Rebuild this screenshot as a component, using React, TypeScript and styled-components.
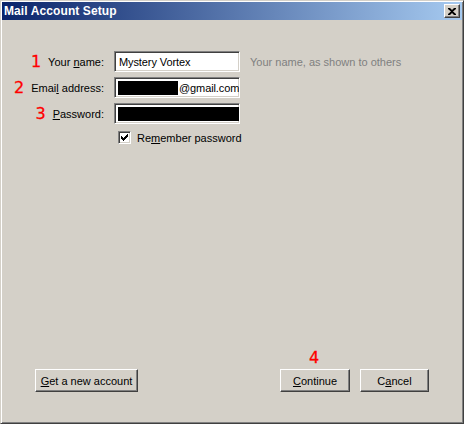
import React from 'react';
import styled, { createGlobalStyle } from 'styled-components';

const GlobalStyle = createGlobalStyle`
  html, body {
    margin: 0;
    padding: 0;
    background: #d4d0c8;
  }
  body {
    font-family: "Liberation Sans", Arial, sans-serif;
    font-size: 11px;
    color: #000;
  }
`;

// 2000-style bevels
const raised = `
  border-top: 1px solid #fff;
  border-left: 1px solid #fff;
  border-right: 1px solid #404040;
  border-bottom: 1px solid #404040;
  box-shadow: inset -1px -1px 0 #808080;
`;

const sunken = `
  border-top: 1px solid #808080;
  border-left: 1px solid #808080;
  border-right: 1px solid #fff;
  border-bottom: 1px solid #fff;
  box-shadow: inset 1px 1px 0 #404040, inset -1px -1px 0 #d4d0c8;
`;

type FieldRow = {
  num: string;
  label: React.ReactNode;
  content: React.ReactNode;
  hint?: string;
};

const MailAccountSetup: React.FC = () => {
  const rows: FieldRow[] = [
    {
      num: '1',
      label: <>Your <u>n</u>ame:</>,
      content: <FieldText>Mystery Vortex</FieldText>,
      hint: 'Your name, as shown to others',
    },
    {
      num: '2',
      label: <>Emai<u>l</u> address:</>,
      content: (
        <>
          <Redact $width={60} />
          <FieldText>@gmail.com</FieldText>
        </>
      ),
    },
    {
      num: '3',
      label: <><u>P</u>assword:</>,
      content: <Redact $width={122} />,
    },
  ];

  return (
    <Window>
      <GlobalStyle />
      <TitleBar>
        <Title>Mail Account Setup</Title>
        <CloseButton aria-label="Close">
          <svg width="8" height="7" viewBox="0 0 8 7">
            <path d="M0 0h2l2 2 2-2h2v1L5 3.5 8 6v1H6L4 5 2 7H0V6l3-2.5L0 1z" fill="#000" />
          </svg>
        </CloseButton>
      </TitleBar>

      <Body>
        <Form>
          {rows.map(row => (
            <React.Fragment key={row.num}>
              <Label>
                <Marker>{row.num}</Marker>
                <span>{row.label}</span>
              </Label>
              <Field>{row.content}</Field>
              <Hint>{row.hint ?? ''}</Hint>
            </React.Fragment>
          ))}
          <CheckRow>
            <CheckBox>
              <svg width="7" height="7" viewBox="0 0 7 7">
                <path d="M0 2h1v1h1v1h1V3h1V2h1V1h1V0h1v3H6v1H5v1H4v1H3v1H2V6H1V5H0z" fill="#000" />
              </svg>
            </CheckBox>
            <span>Re<u>m</u>ember password</span>
          </CheckRow>
        </Form>

        <Footer>
          <Button $width={103}><u>G</u>et a new account</Button>
          <Actions>
            <Annotated>
              <FloatingMarker>4</FloatingMarker>
              <Button $width={70}><u>C</u>ontinue</Button>
            </Annotated>
            <Button $width={69}>C<u>a</u>ncel</Button>
          </Actions>
        </Footer>
      </Body>
    </Window>
  );
};

const Window = styled.div`
  box-sizing: border-box;
  width: 464px;
  height: 424px;
  display: flex;
  flex-direction: column;
  background: #d4d0c8;
  border-top: 1px solid #d4d0c8;
  border-left: 1px solid #d4d0c8;
  border-right: 1px solid #404040;
  border-bottom: 1px solid #404040;
  box-shadow: inset 1px 1px 0 #fff, inset -1px -1px 0 #808080;
  padding: 1px 1px 2px 1px;
`;

const TitleBar = styled.div`
  height: 18px;
  flex-shrink: 0;
  display: flex;
  align-items: center;
  justify-content: space-between;
  padding: 0 2px 0 2px;
  background: linear-gradient(to right, #0a246a, #a6caf0);
`;

const Title = styled.span`
  color: #fff;
  font-weight: 700;
  font-size: 12px;
  letter-spacing: 0.1px;
`;

const CloseButton = styled.div`
  box-sizing: border-box;
  width: 16px;
  height: 14px;
  display: flex;
  align-items: center;
  justify-content: center;
  background: #d4d0c8;
  ${raised}
`;

const Body = styled.div`
  flex: 1;
  display: flex;
  flex-direction: column;
  justify-content: space-between;
  padding: 31px 33px 29px 33px;
`;

const Form = styled.div`
  display: grid;
  grid-template-columns: 69px 126px 1fr;
  grid-auto-rows: 21px;
  column-gap: 10px;
  row-gap: 5px;
  align-items: center;
`;

const Label = styled.div`
  display: flex;
  align-items: center;
  justify-content: flex-end;
  gap: 7px;
  white-space: nowrap;
`;

const Marker = styled.span`
  color: #ff0000;
  font-family: "DejaVu Sans", Verdana, sans-serif;
  font-size: 16px;
  line-height: 1;
  -webkit-text-stroke: 0.3px #ff0000;
`;

const Field = styled.div`
  box-sizing: border-box;
  height: 21px;
  display: flex;
  align-items: stretch;
  background: #fff;
  padding: 3px 1px 2px 3px;
  overflow: hidden;
  white-space: nowrap;
  ${sunken}
`;

const FieldText = styled.span`
  display: flex;
  align-items: center;
  padding-left: 1px;
  letter-spacing: -0.1px;
`;

const Redact = styled.span<{ $width: number }>`
  flex-shrink: 0;
  width: ${props => props.$width}px;
  background: #000;
`;

const Hint = styled.span`
  color: #808080;
  white-space: nowrap;
`;

const CheckRow = styled.label`
  grid-column: 2 / 4;
  display: flex;
  align-items: center;
  gap: 6px;
  padding-left: 4px;
  margin-top: -4px;
  white-space: nowrap;
`;

const CheckBox = styled.span`
  box-sizing: border-box;
  width: 13px;
  height: 13px;
  display: flex;
  align-items: center;
  justify-content: center;
  background: #fff;
  ${sunken}
`;

const Footer = styled.div`
  display: flex;
  align-items: flex-end;
  justify-content: space-between;
`;

const Actions = styled.div`
  display: flex;
  gap: 10px;
`;

const Annotated = styled.div`
  position: relative;
`;

const FloatingMarker = styled(Marker)`
  position: absolute;
  left: 29px;
  top: -19px;
`;

const Button = styled.div<{ $width: number }>`
  box-sizing: border-box;
  width: ${props => props.$width}px;
  height: 23px;
  display: flex;
  align-items: center;
  justify-content: center;
  background: #d4d0c8;
  ${raised}
`;

export default MailAccountSetup;
